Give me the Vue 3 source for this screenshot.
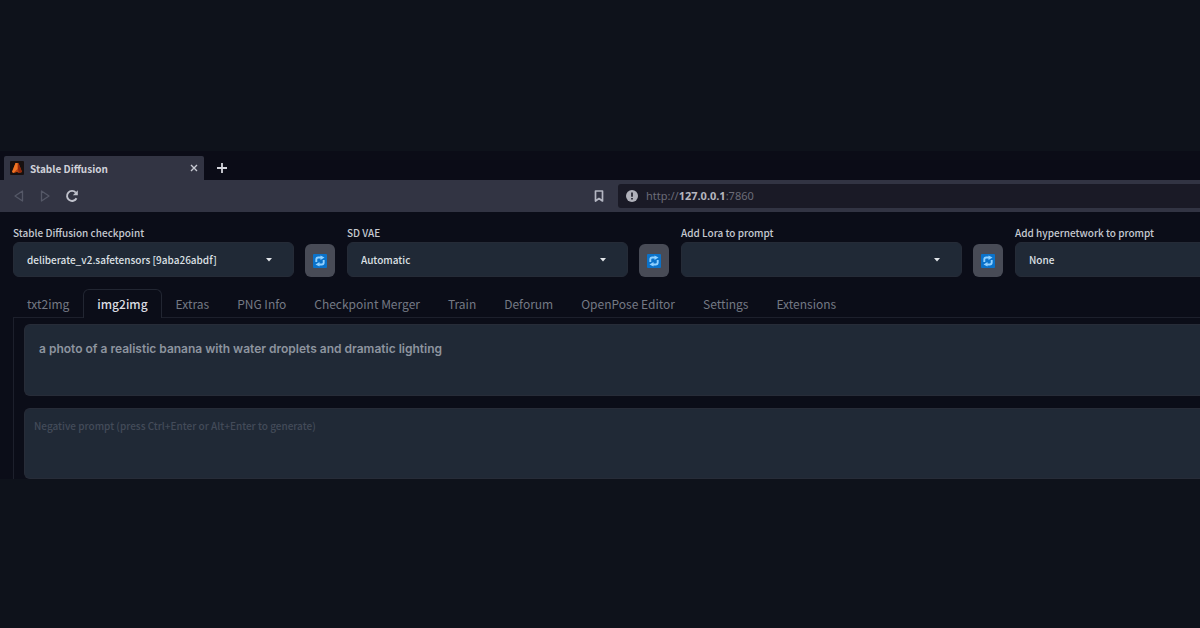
<script setup>
import { ref } from 'vue'

const fields = ref([
  { id: 'checkpoint', label: 'Stable Diffusion checkpoint', value: 'deliberate_v2.safetensors [9aba26abdf]' },
  { id: 'vae', label: 'SD VAE', value: 'Automatic' },
  { id: 'lora', label: 'Add Lora to prompt', value: '' },
  { id: 'hypernetwork', label: 'Add hypernetwork to prompt', value: 'None' },
])

const tabs = [
  'txt2img', 'img2img', 'Extras', 'PNG Info', 'Checkpoint Merger',
  'Train', 'Deforum', 'OpenPose Editor', 'Settings', 'Extensions',
]
const active = ref('img2img')
const prompt = ref('a photo of a realistic banana with water droplets and dramatic lighting')
const negative = ref('')
</script>

<template>
  <main class="page">
    <section class="browser">
      <div class="strip">
        <div class="browser-tab">
          <svg class="favicon" viewBox="0 0 14 14" aria-hidden="true">
            <rect width="14" height="14" rx="1" fill="#17100f" />
            <path d="M5.500 2h3l3.500 9-3 1-2-1-3 1-2-1z" fill="#b8420f" />
            <path d="M5.500 2h2v6l-4 4-1.500-1z" fill="#ef7424" />
            <path d="M8.500 2l3.500 9-3 1-1-4z" fill="#8f260c" />
          </svg>
          <span class="browser-title">Stable Diffusion</span>
          <button class="plain" aria-label="Close tab">
            <svg width="8" height="8" viewBox="0 0 8 8"><path d="M1 1l6 6M7 1L1 7" stroke="#c8cad3" stroke-width="1.4" /></svg>
          </button>
        </div>
        <button class="plain" aria-label="New tab">
          <svg width="10" height="10" viewBox="0 0 10 10"><path d="M5 0v10M0 5h10" stroke="#d4d5dc" stroke-width="1.8" /></svg>
        </button>
      </div>

      <div class="toolbar">
        <nav class="history">
          <button class="plain" aria-label="Back">
            <svg width="12" height="12" viewBox="0 0 12 12"><path d="M9.500 1v10L2 6z" fill="none" stroke="#555867" stroke-width="1.300" stroke-linejoin="round" /></svg>
          </button>
          <button class="plain" aria-label="Forward">
            <svg width="12" height="12" viewBox="0 0 12 12"><path d="M2.500 1v10L10 6z" fill="none" stroke="#555867" stroke-width="1.300" stroke-linejoin="round" /></svg>
          </button>
          <button class="plain" aria-label="Reload">
            <svg width="14" height="14" viewBox="0 0 14 14">
              <path d="M11.500 9.200A5 5 0 1 1 10.800 3.600" fill="none" stroke="#c0c2cc" stroke-width="1.900" />
              <path d="M12.800 1.200v5H7.800z" fill="#c0c2cc" />
            </svg>
          </button>
        </nav>
        <button class="plain bookmark" aria-label="Bookmark">
          <svg width="10" height="12" viewBox="0 0 10 12"><path d="M1.500 1h7v10L5 8.500 1.500 11z" fill="none" stroke="#b4b6c2" stroke-width="1.700" stroke-linejoin="round" /></svg>
        </button>
        <div class="address">
          <svg width="12" height="12" viewBox="0 0 12 12" aria-hidden="true">
            <circle cx="6" cy="6" r="6" fill="#b0b1ba" />
            <path d="M6 2.500v4.300M6 8v1.600" stroke="#1b1b27" stroke-width="1.600" />
          </svg>
          <a class="url" href="http://127.0.0.1:7860">http://<b>127.0.0.1</b>:7860</a>
        </div>
      </div>

      <div class="app">
        <div class="settings">
          <div v-for="f in fields" :key="f.id" class="setting">
            <label :for="f.id">{{ f.label }}</label>
            <div class="control">
              <div class="select-wrap">
                <select :id="f.id" v-model="f.value">
                  <option :value="f.value">{{ f.value }}</option>
                </select>
                <svg class="caret" width="8" height="5" viewBox="0 0 8 5" aria-hidden="true"><path d="M1 1h6L4 4.500z" fill="#e3e6ea" /></svg>
              </div>
              <button class="refresh" :aria-label="'Refresh ' + f.label">
                <svg width="14" height="14" viewBox="0 0 14 14">
                  <rect width="14" height="14" rx="1" fill="#0b72c9" />
                  <path d="M3.300 8V5.500a2 2 0 0 1 2-2H8M10.700 6v2.500a2 2 0 0 1-2 2H6" fill="none" stroke="#8fd0ff" stroke-width="1.900" />
                  <path d="M7.500 1.500l4 2-4 2.500zM6.500 8l-4 2.500 4 2z" fill="#8fd0ff" />
                </svg>
              </button>
            </div>
          </div>
        </div>

        <div class="tabs" role="tablist">
          <button
            v-for="t in tabs"
            :key="t"
            class="tab"
            :class="{ active: t === active }"
            role="tab"
            :aria-selected="t === active"
            @click="active = t"
          >{{ t }}</button>
        </div>

        <div class="panel">
          <textarea v-model="prompt" class="prompt" aria-label="Prompt"></textarea>
          <textarea
            v-model="negative"
            class="negative"
            aria-label="Negative prompt"
            placeholder="Negative prompt (press Ctrl+Enter or Alt+Enter to generate)"
          ></textarea>
        </div>
      </div>
    </section>
  </main>
</template>

<style>
body {
  background: #0e121b;
}
</style>

<style scoped>
* {
  box-sizing: border-box;
}
.page {
  min-height: 100vh;
  padding: 151px 0 149px;
  overflow: hidden;
  background: #0e121b;
  font-family: "Noto Sans CJK SC", "Noto Sans", sans-serif;
}
button,
select,
textarea {
  margin: 0;
  border: 0;
  font: inherit;
}
.plain {
  display: flex;
  padding: 0;
  background: none;
}
.browser {
  background: #0b0c17;
}
.strip {
  display: flex;
  align-items: center;
  gap: 13px;
  height: 29px;
  padding: 5px 4px 0;
}
.browser-tab {
  display: flex;
  align-items: center;
  gap: 6px;
  width: 200px;
  height: 24px;
  padding: 0 6px;
  border-radius: 2px 2px 0 0;
  background: #323443;
}
.favicon {
  width: 14px;
  height: 14px;
}
.browser-title {
  flex: 1;
  color: #d0d1d9;
  font-size: 10px;
  font-weight: 700;
}
.toolbar {
  display: flex;
  align-items: center;
  height: 32px;
  padding-left: 13px;
  background: #323443;
}
.history {
  display: flex;
  align-items: center;
  gap: 14px;
  flex: 0 0 581px;
}
.bookmark {
  flex: none;
}
.address {
  display: flex;
  align-items: center;
  gap: 8px;
  flex: 1;
  height: 24px;
  margin-left: 14px;
  padding-left: 8px;
  border-radius: 3px 0 0 3px;
  background: #1a1a26;
}
.url {
  color: #6b6c78;
  font-family: "Noto Sans", sans-serif;
  font-size: 11px;
  line-height: 14px;
  text-decoration: none;
}
.url b {
  color: #b5b6bf;
}
.app {
  padding: 12px 0 0 13px;
  background: #0b0d18;
}
.settings {
  display: flex;
  gap: 12px;
}
.setting {
  flex: 0 0 322px;
}
label {
  display: block;
  height: 18px;
  color: #c5c9d0;
  font-size: 10px;
  font-weight: 500;
  line-height: 18px;
}
.control {
  display: flex;
  align-items: flex-end;
  gap: 11px;
}
.select-wrap {
  position: relative;
  flex: 1;
}
select {
  display: block;
  width: 100%;
  height: 35px;
  padding: 0 32px 0 13px;
  border: 1px solid #252b37;
  border-radius: 6px;
  appearance: none;
  background: #202936;
  color: #dde0e5;
  font-size: 10px;
  font-weight: 500;
}
.caret {
  position: absolute;
  top: 15px;
  right: 21px;
  pointer-events: none;
}
.refresh {
  display: flex;
  align-items: center;
  justify-content: center;
  width: 30px;
  height: 33px;
  padding: 0;
  border-radius: 6px;
  background: #484b56;
}
.tabs {
  display: flex;
  margin-top: 12px;
}
.tab {
  flex: none;
  height: 29px;
  padding: 0 13px;
  border: 1px solid transparent;
  border-bottom: 0;
  border-radius: 6px 6px 0 0;
  background: none;
  color: #747984;
  font-size: 12px;
  line-height: 20px;
  white-space: nowrap;
}
.tab.active {
  position: relative;
  border-color: #222632;
  background: #0b0d18;
  color: #d9dbe1;
  font-weight: 500;
}
.panel {
  display: flex;
  flex-direction: column;
  gap: 12px;
  margin-top: -1px;
  padding: 6px 0 0 10px;
  border-top: 1px solid #1d202c;
  border-left: 1px solid #1d202c;
}
textarea {
  display: block;
  width: 100%;
  height: 72px;
  border: 1px solid #272c38;
  border-right: 0;
  border-radius: 6px 0 0 6px;
  background: #202936;
  resize: none;
  outline: 0;
}
.prompt {
  padding: 15px 14px;
  color: #8d949f;
  font-family: Inter, sans-serif;
  font-size: 12px;
  font-weight: 600;
  line-height: 18px;
}
.negative {
  height: 71px;
  padding: 8px 9px;
  color: #8d949f;
  font-size: 10px;
  font-weight: 500;
  line-height: 18px;
}
.negative::placeholder {
  color: #434b59;
  opacity: 1;
}
</style>
